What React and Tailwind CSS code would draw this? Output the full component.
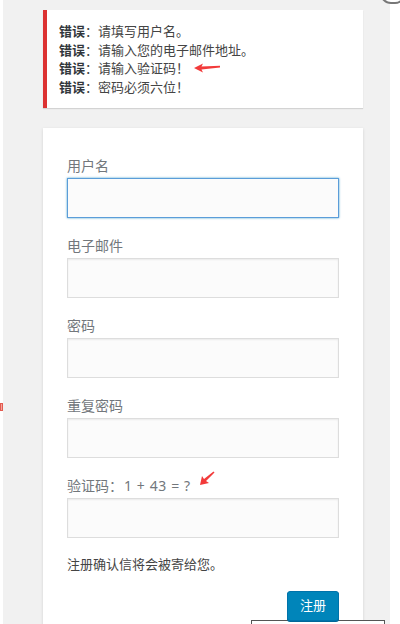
import React from 'react';

const fontStack = {
  fontFamily: '"Noto Sans", "Noto Sans CJK SC", sans-serif',
};

const errors = ['请填写用户名。', '请输入您的电子邮件地址。', '请输入验证码！', '密码必须六位！'];

function ArrowLeft() {
  return (
    <svg width="27" height="10" viewBox="0 0 27 10" className="absolute left-[147px] top-[53px]">
      <polygon points="0,5 9,0.5 7.5,3.6 26,2.8 26,4.6 7.5,6.4 9,9.5" fill="#f23a3a" />
    </svg>
  );
}

function ArrowDownLeft() {
  return (
    <svg width="16" height="15" viewBox="0 0 16 15" className="absolute left-[199px] top-[471px]">
      <polygon points="1,14 3,5 5,8 14.5,0.5 15.5,1.5 7,10 10,12" fill="#f23a3a" />
    </svg>
  );
}

function Field({ label, focused, children }) {
  return (
    <div className="flex flex-col gap-[2px]">
      <label className="text-[14px] leading-[21px] text-[#72777c]">{children || label}</label>
      <div
        className={`h-[40px] w-full bg-[#fbfbfb] border ${
          focused
            ? 'border-[#5b9dd9] shadow-[0_0_2px_rgba(30,140,190,0.8)]'
            : 'border-[#ddd] shadow-[inset_0_1px_2px_rgba(0,0,0,0.07)]'
        }`}
      />
    </div>
  );
}

export default function App() {
  return (
    <div className="relative flex w-[400px] h-[624px] overflow-hidden bg-white" style={fontStack}>
      <div className="w-[3px] shrink-0 bg-white" />

      <div className="w-[387px] shrink-0 bg-[#f1f1f1] pl-[40px] pt-[10px]">
        <div className="relative w-[320px] bg-white border-l-4 border-[#dc3232] shadow-[0_1px_1px_rgba(0,0,0,0.12)] pl-[12px] py-[12px] text-[13px] leading-[18.5px] text-[#444]">
          {errors.map((msg) => (
            <p key={msg}>
              <strong className="font-bold text-[#32373c]">错误</strong>：{msg}
            </p>
          ))}
          <ArrowLeft />
        </div>

        <div className="mt-[20px] w-[320px] bg-white shadow-[0_1px_3px_rgba(0,0,0,0.13)] px-[24px] pt-[27px] pb-[40px]">
          <div className="flex flex-col gap-[17px]">
            <Field label="用户名" focused />
            <Field label="电子邮件" />
            <Field label="密码" />
            <Field label="重复密码" />
            <Field>
              验证码：<span className="ml-[1px] tracking-[0.6px]">1 + 43 = ?</span>
            </Field>
          </div>

          <p className="mt-[16px] text-[13px] leading-[20px] text-[#444]">注册确认信将会被寄给您。</p>

          <div className="mt-[17px] flex justify-end">
            <button className="relative z-10 h-[30px] px-[12px] rounded-[3px] bg-[#0085ba] border border-[#0073aa] text-[13px] text-white shadow-[0_1px_0_#006799]">
              注册
            </button>
          </div>
        </div>
      </div>

      <div className="w-[10px] shrink-0 bg-white" />

      <ArrowDownLeft />

      <div className="absolute left-0 top-[403px] w-[3px] h-[8px] bg-[#f5a49c] border border-[#e35b50]" />
      <div className="absolute left-[251px] top-[620px] w-[134px] h-[10px] bg-white border-t border-x border-[#555]" />
      <div className="absolute left-[380px] top-[-18px] w-[26px] h-[22px] rounded-full border-2 border-[#777] bg-white" />
    </div>
  );
}
